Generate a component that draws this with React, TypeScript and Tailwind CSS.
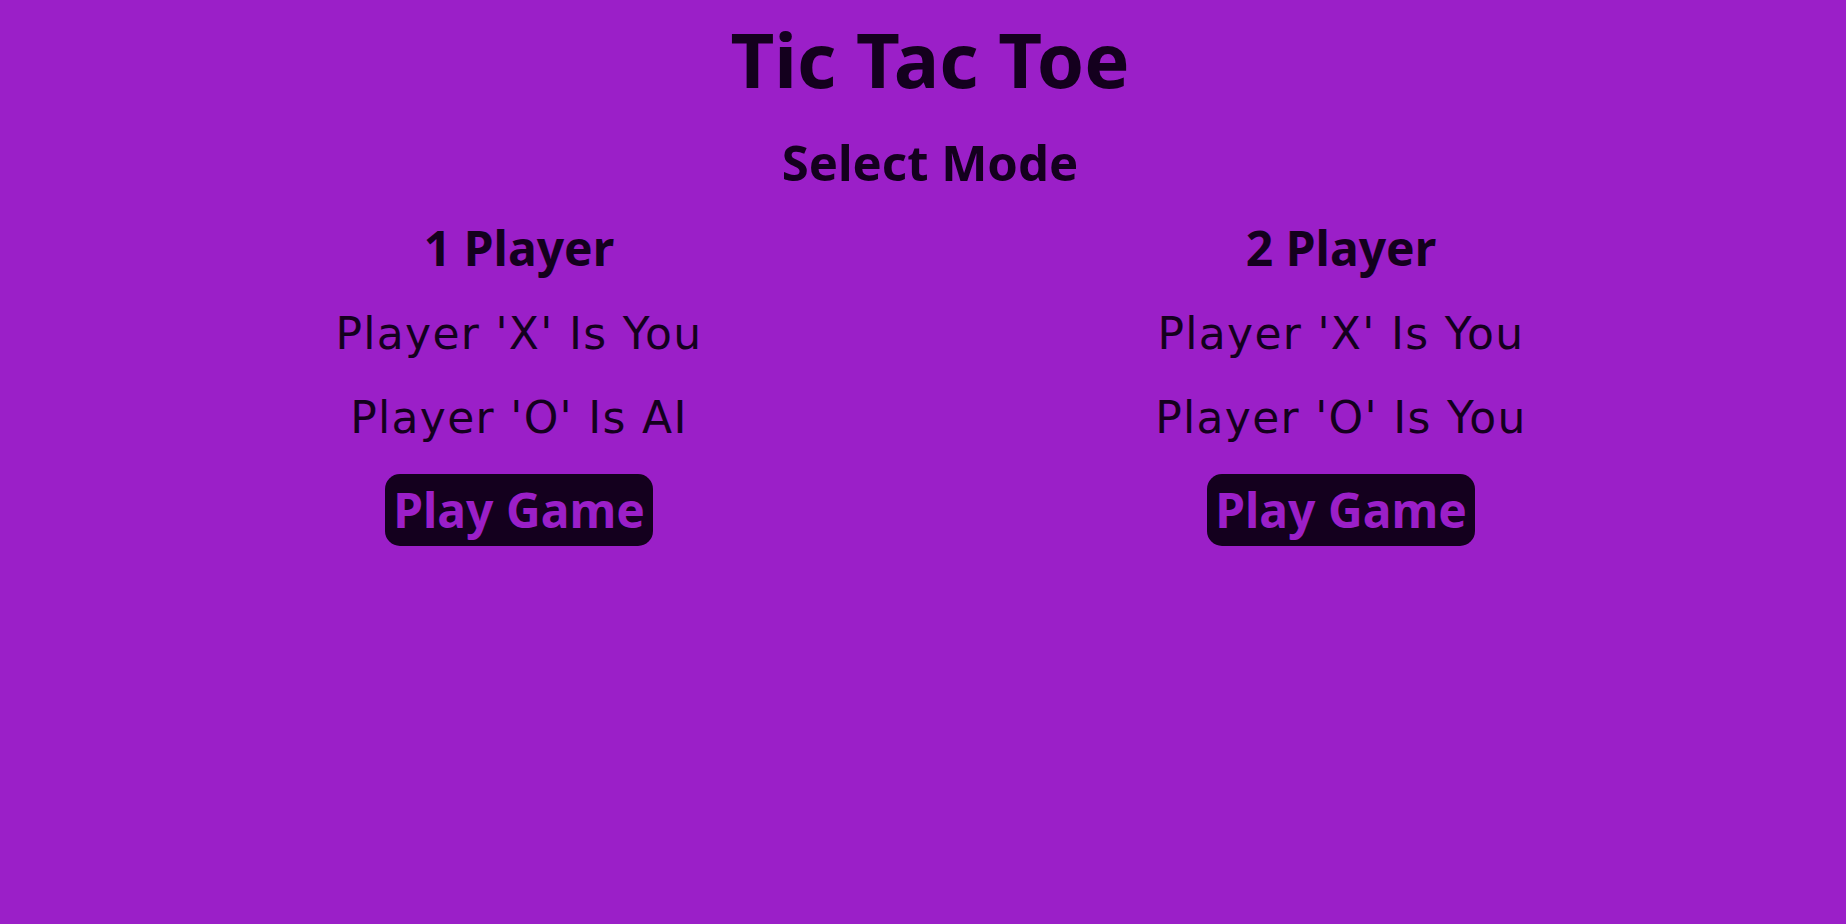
import React from 'react'

const heading = { fontFamily: '"Noto Sans", "Open Sans", sans-serif' }
const body = { fontFamily: '"DejaVu Sans", "Noto Sans", sans-serif' }

function ModeColumn({ title, lines }: { title: string; lines: string[] }) {
  return (
    <div className="w-[822px] flex flex-col items-center">
      <h3 className="text-[48px] font-bold leading-[88px]">{title}</h3>
      {lines.map(l => (
        <p key={l} className="text-[44px] leading-[84px] tracking-[1.3px]" style={body}>
          {l}
        </p>
      ))}
      <button className="mt-[14px] h-[72px] px-[8px] rounded-[15px] bg-[#14001e] text-[#9b1fc8] text-[48px] font-bold leading-[72px]">
        Play Game
      </button>
    </div>
  )
}

export default function App() {
  return (
    <div
      className="min-h-screen w-full bg-[#9b1fc8] text-[#14001e] text-center pl-[14px]"
      style={heading}
    >
      <h1 className="text-[76px] font-bold leading-[110px] pt-[4px]">Tic Tac Toe</h1>
      <h2 className="text-[49px] font-bold leading-[84px] pt-[6px]">Select Mode</h2>
      <div className="flex justify-center">
        <ModeColumn title="1 Player" lines={["Player 'X' Is You", "Player 'O' Is AI"]} />
        <ModeColumn title="2 Player" lines={["Player 'X' Is You", "Player 'O' Is You"]} />
      </div>
    </div>
  )
}
